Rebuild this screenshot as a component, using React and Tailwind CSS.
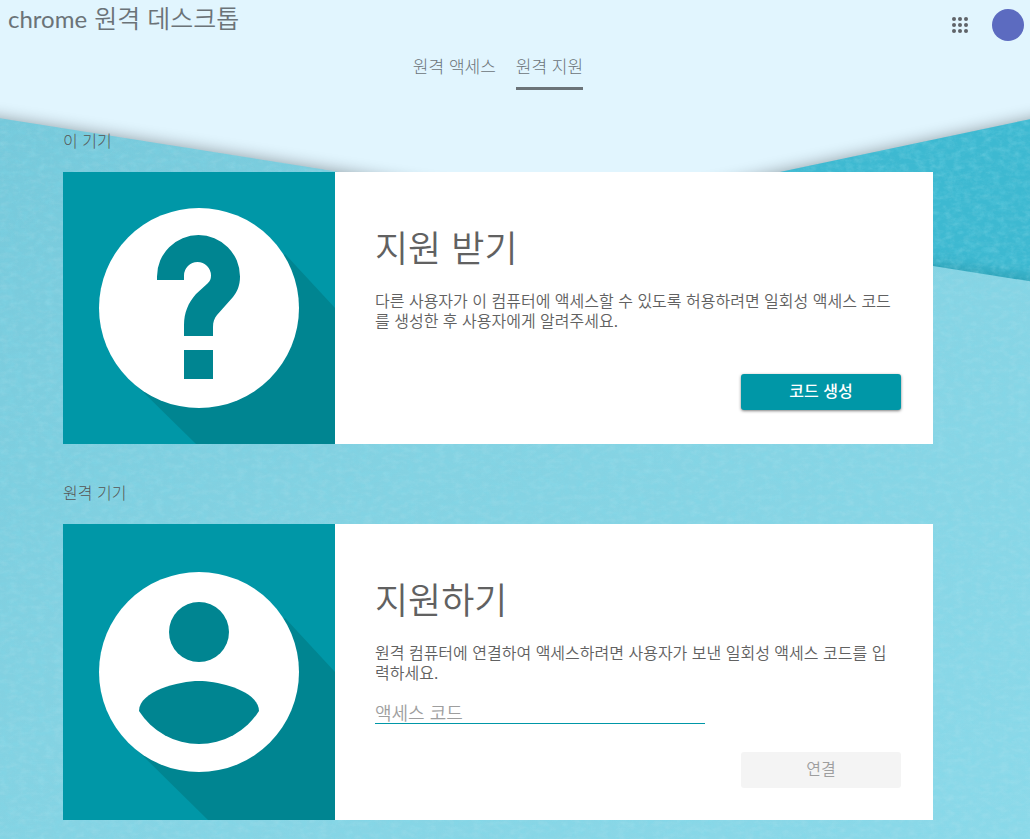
import React, { useState } from 'react';

const tabs = [
  { id: 'access', label: '원격 액세스' },
  { id: 'support', label: '원격 지원' },
];

const PaperBackground = () => (
  <svg
    className="absolute inset-0 w-full h-full"
    viewBox="0 0 1030 839"
    preserveAspectRatio="none"
    aria-hidden="true"
  >
    <defs>
      <linearGradient id="paper" x1="0" y1="0" x2="1" y2="1">
        <stop offset="0" stopColor="#76c9db" />
        <stop offset="0.45" stopColor="#84d2e2" />
        <stop offset="1" stopColor="#8cd9e9" />
      </linearGradient>
      <filter id="shadow" x="-10%" y="-20%" width="120%" height="140%">
        <feGaussianBlur stdDeviation="8" />
      </filter>
      <filter id="grain" x="0" y="0" width="100%" height="100%">
        <feTurbulence type="fractalNoise" baseFrequency="0.13 0.17" numOctaves="5" seed="23" />
        <feColorMatrix values="0 0 0 0 0.2  0 0 0 0 0.7  0 0 0 0 0.83  2 0 0 0 -0.8" />
      </filter>
      <filter id="fibre" x="0" y="0" width="100%" height="100%">
        <feTurbulence type="fractalNoise" baseFrequency="0.11 0.19" numOctaves="5" seed="61" />
        <feColorMatrix values="0 0 0 0 0.75  0 0 0 0 0.9  0 0 0 0 0.94  2 0 0 0 -0.85" />
      </filter>
      <clipPath id="papers">
        <path d="M0 118 593 211 1030 119V839H0Z" />
      </clipPath>
    </defs>
    <rect width="1030" height="839" fill="#e1f5fe" />
    <path d="M-40 112 593 211 1070 111V400H-40Z" fill="#000" opacity="0.36" filter="url(#shadow)" />
    <path d="M593 211 1030 119V300H593Z" fill="#3db9d1" />
    <g clipPath="url(#papers)">
      <path d="M560 206 1070 286V400H560Z" fill="#00606f" opacity="0.4" filter="url(#shadow)" />
    </g>
    <path d="M0 118 1030 281V839H0Z" fill="url(#paper)" />
    <g clipPath="url(#papers)">
      <rect width="1030" height="839" filter="url(#grain)" opacity="0.3" />
      <rect width="1030" height="839" filter="url(#fibre)" opacity="0.12" />
    </g>
  </svg>
);

const HelpIcon = () => (
  <svg width="272" height="272" viewBox="0 0 272 272" aria-hidden="true">
    <path d="M222 82 272 136V272H133L74 214Z" fill="#008591" />
    <circle cx="136" cy="136" r="100" fill="#fff" />
    <path
      d="M94 108V104.5A41.5 41.5 0 0 1 177 104.5C177 114 174 120 170 125L154 143C151 147 150 150 150 155V164H121V153C121 141 125 131 133 122L144.5 111.5C147 109 148 107 148 103.5A13.5 13.5 0 0 0 121 103.5V108Z"
      fill="#008591"
    />
    <path d="M121 178h29v29h-29z" fill="#008591" />
  </svg>
);

const PersonIcon = () => (
  <svg width="272" height="296" viewBox="0 0 272 296" aria-hidden="true">
    <path d="M222 94 272 148V296H145L74 226Z" fill="#008591" />
    <circle cx="136" cy="148" r="100" fill="#fff" />
    <circle cx="136" cy="108" r="30" fill="#008591" />
    <path d="M76 187C76 167 116 157 136 157C156 157 196 167 196 187A71 71 0 0 1 76 187Z" fill="#008591" />
  </svg>
);

const AppsIcon = () => (
  <svg width="24" height="24" viewBox="0 0 24 24" fill="#5f6368">
    {[6, 12, 18].map(y => [6, 12, 18].map(x => <circle key={`${x}-${y}`} cx={x} cy={y} r="2" />))}
  </svg>
);

const Card = ({ section, icon, title, description, children }) => (
  <section>
    <h2 className="mb-[22px] text-base leading-5 font-light text-[#555]">{section}</h2>
    <div className="flex bg-white">
      <div className="shrink-0 bg-[#0097a7]">{icon}</div>
      <div className="flex flex-1 flex-col pt-12 pl-10 pr-8 text-[#616161]">
        <h3 className="text-4xl leading-[52px]">{title}</h3>
        <p className="mt-[18px] max-w-[520px] text-base leading-5">{description}</p>
        {children}
      </div>
    </div>
  </section>
);

const App = () => {
  const [activeTab, setActiveTab] = useState('support');
  const [code, setCode] = useState('');

  const handleSubmit = (e) => {
    e.preventDefault();
  };

  return (
    <div
      lang="ko"
      className="relative min-h-screen overflow-hidden bg-[#e1f5fe] font-['Noto_Sans_CJK_KR',sans-serif] font-[350]"
    >
      <PaperBackground />

      <div className="relative">
        <header className="flex h-[50px] items-center justify-between pl-2 pr-[6px]">
          <h1 className="mb-[14px] text-[25px] leading-8 text-[#6b7378]">
            <span className="font-[family-name:Lato,sans-serif] text-2xl leading-8 font-normal">chrome</span> 원격 데스크톱
          </h1>
          <div className="flex items-center gap-5">
            <button type="button" aria-label="Google 앱">
              <AppsIcon />
            </button>
            <button type="button" aria-label="계정" className="size-8 rounded-full bg-[#5c6bc0]" />
          </div>
        </header>

        <div className="pr-[34px]">
          <nav className="flex h-10 justify-center gap-5">
            {tabs.map(tab => (
              <button
                key={tab.id}
                type="button"
                onClick={() => setActiveTab(tab.id)}
                className={`border-b-3 pb-[6px] text-[17px] leading-8 font-light text-[#6b7378] ${
                  activeTab === tab.id ? 'border-[#6b7378]' : 'border-transparent'
                }`}
              >
                {tab.label}
              </button>
            ))}
          </nav>

          <main className="mx-auto flex max-w-[870px] flex-col gap-[38px] pt-10 pb-5">
            <Card
              section="이 기기"
              icon={<HelpIcon />}
              title="지원 받기"
              description="다른 사용자가 이 컴퓨터에 액세스할 수 있도록 허용하려면 일회성 액세스 코드를 생성한 후 사용자에게 알려주세요."
            >
              <button
                type="button"
                className="mt-auto mb-[34px] h-9 w-40 self-end rounded-[3px] bg-[#0097a7] pb-1 text-base leading-5 font-medium text-white shadow-[0_1px_3px_rgba(0,0,0,0.5)]"
              >
                코드 생성
              </button>
            </Card>

            <Card
              section="원격 기기"
              icon={<PersonIcon />}
              title="지원하기"
              description="원격 컴퓨터에 연결하여 액세스하려면 사용자가 보낸 일회성 액세스 코드를 입력하세요."
            >
              <form onSubmit={handleSubmit} className="flex flex-1 flex-col">
                <input
                  type="text"
                  aria-label="액세스 코드"
                  placeholder="액세스 코드"
                  value={code}
                  onChange={(e) => setCode(e.target.value)}
                  className="mt-[18px] h-6 w-[330px] border-b border-[#0097a7] bg-transparent text-lg leading-6 placeholder:text-[#9e9e9e] focus:outline-none"
                />
                <button
                  type="submit"
                  disabled={!code}
                  className="mt-auto mb-8 h-9 w-40 self-end rounded-[3px] bg-[#f4f4f4] pb-1 text-base leading-5 text-[#9e9e9e]"
                >
                  연결
                </button>
              </form>
            </Card>
          </main>
        </div>
      </div>
    </div>
  );
};

export default App;
